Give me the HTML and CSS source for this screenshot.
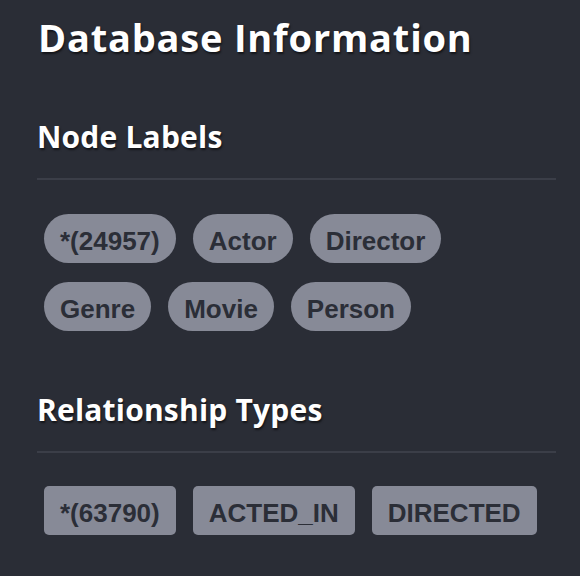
FILE: index.html
```html
<!DOCTYPE html>
<html>
<head>
<meta charset="utf-8">
<link rel="stylesheet" href="styles.css">
</head>
<body>
<div class="panel">
  <h1 class="title">Database Information</h1>
  <section class="section">
    <h2 class="section-title">Node Labels</h2>
    <div class="tags">
      <span class="tag pill">*(24957)</span>
      <span class="tag pill">Actor</span>
      <span class="tag pill">Director</span>
      <span class="tag pill">Genre</span>
      <span class="tag pill">Movie</span>
      <span class="tag pill">Person</span>
    </div>
  </section>
  <section class="section">
    <h2 class="section-title">Relationship Types</h2>
    <div class="tags">
      <span class="tag box">*(63790)</span>
      <span class="tag box">ACTED_IN</span>
      <span class="tag box">DIRECTED</span>
    </div>
  </section>
</div>
</body>
</html>
```
FILE: styles.css
```css
html, body {
  margin: 0;
  padding: 0;
  background: #2a2d36;
}
.panel {
  padding: 15px 24px 0 37px;
  min-height: 561px;
}
.title {
  margin: 0 0 0 1px;
  font-family: "Open Sans", sans-serif;
  font-weight: 700;
  font-size: 38px;
  line-height: 44px;
  letter-spacing: 0.8px;
  color: #ffffff;
  text-shadow: 1px 2px 2px rgba(0, 0, 0, 0.55);
}
.section {
  margin-top: 60px;
}
.section + .section {
  margin-top: 61px;
}
.section-title {
  margin: 0;
  padding-bottom: 23px;
  border-bottom: 2px solid #3b3e48;
  font-family: "Open Sans", sans-serif;
  font-weight: 700;
  font-size: 30px;
  line-height: 36px;
  letter-spacing: 0.2px;
  color: #ffffff;
  text-shadow: 1px 2px 2px rgba(0, 0, 0, 0.55);
}
.tags {
  display: flex;
  flex-wrap: wrap;
  column-gap: 17px;
  row-gap: 19px;
  padding: 34px 0 0 7px;
}
.section + .section .tags {
  padding-top: 33px;
}
.tag {
  display: block;
  padding: 5px 16px 0;
  height: 44px;
  line-height: 44px;
  font-family: "Liberation Sans", Arial, sans-serif;
  font-weight: 700;
  font-size: 26px;
  color: #2b2e37;
  background: #878a97;
}
.pill {
  border-radius: 25px;
}
.box {
  border-radius: 5px;
}
```
